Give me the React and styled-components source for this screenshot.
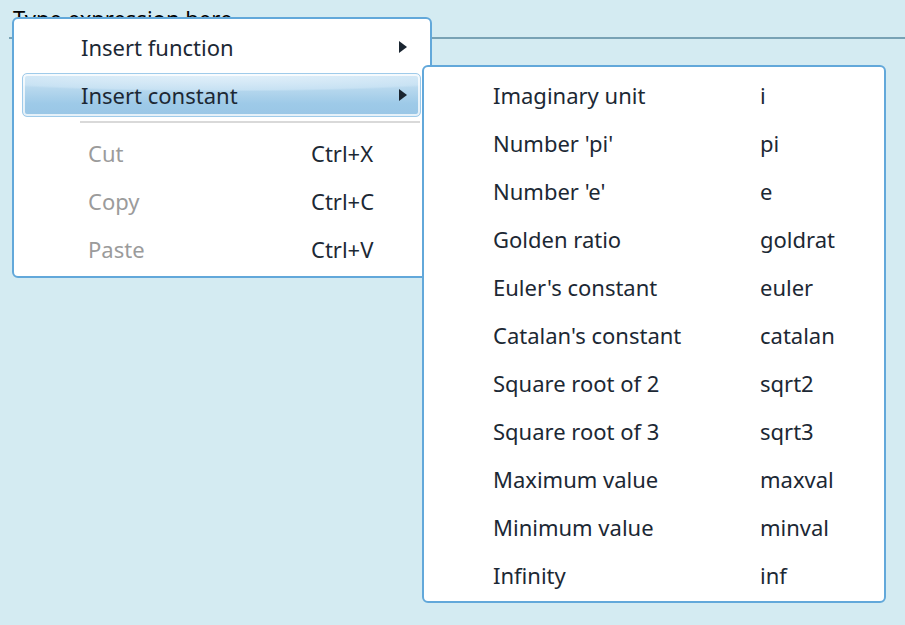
import React from "react";
import styled, { createGlobalStyle } from "styled-components";

const Global = createGlobalStyle`
  html, body { margin: 0; padding: 0; }
  body {
    background: #d4ebf2;
    font-family: "Noto Sans", "Open Sans", "DejaVu Sans", sans-serif;
  }
`;

const Stage = styled.div`
  position: relative;
  width: 905px;
  height: 625px;
  overflow: hidden;
  background: #d4ebf2;
`;

const Field = styled.div`
  margin-left: 9px;
  height: 39px;
  border-bottom: 2px solid #78a2b5;
  padding: 3px 0 0 4px;
  box-sizing: border-box;
  font-size: 22px;
  line-height: 30px;
  color: #000;
`;

const Menu = styled.div`
  position: absolute;
  left: ${(p) => p.$x}px;
  top: ${(p) => p.$y}px;
  width: ${(p) => p.$w}px;
  box-sizing: border-box;
  background: #fff;
  border: 2px solid #62a8da;
  border-radius: 6px;
  padding: ${(p) => p.$pad};
  display: flex;
  flex-direction: column;
  gap: 4px;
  font-size: 22px;
  color: #1c2834;
`;

const Row = styled.div`
  position: relative;
  height: 44px;
  display: grid;
  grid-template-columns: ${(p) => p.$cols};
  align-items: center;
  margin: 0 ${(p) => p.$mr || 0}px 0 ${(p) => p.$ml || 0}px;
  border-radius: 5px;
  box-sizing: border-box;
  ${(p) =>
    p.$active &&
    `
    border: 1px solid #9fcbea;
    box-shadow: inset 0 0 0 2px rgba(255,255,255,0.75);
    background:
      radial-gradient(ellipse 115% 65% at 50% 0%, rgba(228,241,250,0.95) 0%, rgba(205,229,245,0.75) 58%, rgba(255,255,255,0) 64%),
      linear-gradient(#cfe5f4 0%, #b0d4ec 45%, #9ecae8 70%, #99c6e6 100%);
  `}
`;

const Label = styled.span`
  padding-left: ${(p) => p.$pl || 0}px;
  white-space: nowrap;
  color: ${(p) => (p.$disabled ? "#9b9b9b" : "#1c2834")};
`;

const Arrow = styled.span`
  justify-self: end;
  width: 0;
  height: 0;
  border-top: 6px solid transparent;
  border-bottom: 6px solid transparent;
  border-left: 8px solid #1a2530;
  margin-right: ${(p) => p.$mr}px;
`;

const Separator = styled.div`
  height: 2px;
  background: #d9d9d9;
  margin: 0 10px 4px 66px;
`;

const constants = [
  ["Imaginary unit", "i"],
  ["Number 'pi'", "pi"],
  ["Number 'e'", "e"],
  ["Golden ratio", "goldrat"],
  ["Euler's constant", "euler"],
  ["Catalan's constant", "catalan"],
  ["Square root of 2", "sqrt2"],
  ["Square root of 3", "sqrt3"],
  ["Maximum value", "maxval"],
  ["Minimum value", "minval"],
  ["Infinity", "inf"],
];

const edits = [
  ["Cut", "Ctrl+X"],
  ["Copy", "Ctrl+C"],
  ["Paste", "Ctrl+V"],
];

export default function App() {
  return (
    <>
      <Global />
      <Stage>
        <Field>Type expression here</Field>
        <Menu $x={12} $y={17} $w={420} $pad="6px 0 5px 0">
          <Row $cols="1fr auto" $ml={8} $mr={9}>
            <Label $pl={59}>Insert function</Label>
            <Arrow $mr={14} />
          </Row>
          <Row $cols="1fr auto" $ml={8} $mr={9} $active>
            <Label $pl={58}>Insert constant</Label>
            <Arrow $mr={13} />
          </Row>
          <Separator />
          {edits.map(([l, s]) => (
            <Row key={l} $cols="289px 1fr" $ml={8} $mr={9}>
              <Label $pl={66} $disabled>{l}</Label>
              <Label>{s}</Label>
            </Row>
          ))}
        </Menu>
        <Menu $x={422} $y={65} $w={464} $pad="6px 0 4px 0">
          {constants.map(([l, v]) => (
            <Row key={l} $cols="336px 1fr">
              <Label $pl={69}>{l}</Label>
              <Label>{v}</Label>
            </Row>
          ))}
        </Menu>
      </Stage>
    </>
  );
}
